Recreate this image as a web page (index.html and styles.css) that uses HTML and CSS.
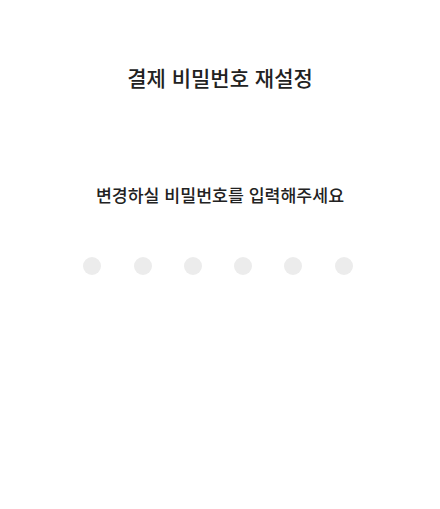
FILE: index.html
```html
<!DOCTYPE html>
<html lang="ko">
<head>
    <meta charset="UTF-8">
    <meta name="viewport" content="width=device-width, initial-scale=1.0">
    <title>결제 비밀번호 재설정</title>
    <link rel="stylesheet" href="styles.css">
</head>
<body>
    <div class="page">
        <h1 class="page-title">결제 비밀번호 재설정</h1>

        <div class="pin-section">
            <p class="pin-guide">변경하실 비밀번호를 입력해주세요</p>
            <div class="pin-dots">
                <span class="dot"></span>
                <span class="dot"></span>
                <span class="dot"></span>
                <span class="dot"></span>
                <span class="dot"></span>
                <span class="dot"></span>
            </div>
        </div>
    </div>
</body>
</html>
```

FILE: styles.css
```css
* {
    margin: 0;
    padding: 0;
    box-sizing: border-box;
}

body {
    font-family: "Noto Sans CJK KR", "Noto Sans", sans-serif;
    background: #ffffff;
    color: #222222;
}

.page {
    display: flex;
    flex-direction: column;
    align-items: center;
    padding-top: 62px;
}

.page-title {
    font-size: 21px;
    font-weight: 500;
    line-height: 30px;
}

.pin-section {
    display: flex;
    flex-direction: column;
    align-items: center;
    margin-top: 90px;
}

.pin-guide {
    font-size: 17.3px;
    font-weight: 500;
    line-height: 26px;
}

.pin-dots {
    display: flex;
    gap: 32.3px;
    margin-top: 49px;
    margin-right: 4px;
}

.dot {
    width: 18px;
    height: 18px;
    border-radius: 50%;
    background: #ececec;
}
```
